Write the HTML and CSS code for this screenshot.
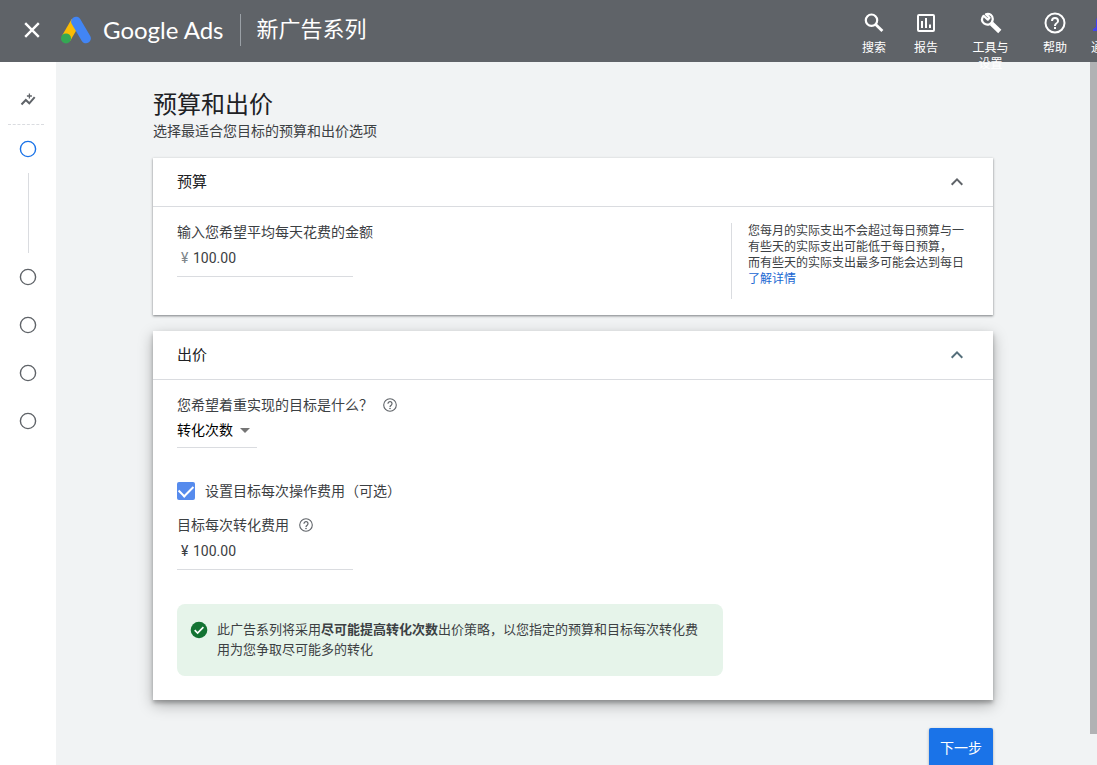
FILE: index.html
```html
<!DOCTYPE html>
<html lang="zh-CN">
<head>
<meta charset="utf-8">
<meta name="viewport" content="width=device-width, initial-scale=1">
<title>新广告系列 - Google Ads</title>
<link rel="stylesheet" href="styles.css">
</head>
<body>
<header class="topbar">
  <button class="close" type="button" aria-label="关闭">
    <svg width="24" height="24" viewBox="0 0 24 24"><path d="M5.2 5.2l13.6 13.6M18.8 5.2L5.2 18.8" stroke="currentColor" stroke-width="2.4" fill="none"/></svg>
  </button>
  <a class="brand" href="#">
    <svg width="30" height="28" viewBox="0 0 30 28" aria-hidden="true">
      <path d="M14.8 5.5L5 22.500" stroke="#fbbc04" stroke-width="9.600" fill="none"/>
      <path d="M15 5.600L25 22.400" stroke="#4285f4" stroke-width="9.800" stroke-linecap="round" fill="none"/>
      <circle cx="5" cy="22.400" r="5" fill="#34a853"/>
    </svg>
    <span class="brand-name">Google Ads</span>
  </a>
  <span class="page-name">新广告系列</span>
  <nav class="tools" aria-label="工具">
    <button class="tool" type="button">
      <svg width="24" height="24" viewBox="0 0 24 24"><circle cx="9.500" cy="9.200" r="5.700" stroke="currentColor" stroke-width="2.200" fill="none"/><path d="M13.700 13.400l6.700 6.700" stroke="currentColor" stroke-width="2.800" fill="none"/></svg>
      <span class="tool-label">搜索</span>
    </button>
    <button class="tool" type="button">
      <svg width="24" height="24" viewBox="0 0 24 24"><rect x="4" y="4" width="16" height="16" rx="1" stroke="currentColor" stroke-width="2" fill="none"/><path d="M8 10v7M12 7v10M16 13.500V17" stroke="currentColor" stroke-width="2" fill="none"/></svg>
      <span class="tool-label">报告</span>
    </button>
    <button class="tool tool-wide" type="button">
      <svg width="24" height="24" viewBox="0 0 24 24"><path d="M12.500 12.500l8.300 8" stroke="currentColor" stroke-width="4.600" fill="none"/><path d="M4.600 4.800L8.800 8.700 10.500 6.800 6.900 3.200C10.500 1.900 14.200 4.600 13.700 8.700c-.5 4.300-5.200 6.300-8.700 3.700C2.700 10.500 2.300 7.600 4.600 4.800z" stroke="currentColor" stroke-width="2.200" stroke-linejoin="round" fill="none"/></svg>
      <span class="tool-label">工具与设置</span>
    </button>
    <button class="tool" type="button">
      <svg width="24" height="24" viewBox="0 0 24 24"><circle cx="12" cy="12" r="9.500" stroke="currentColor" stroke-width="2" fill="none"/><path fill="currentColor" d="M11 16h2v2h-2zM12 6a4 4 0 0 0-4 4h2a2 2 0 1 1 4 0c0 2-3 1.800-3 5h2c0-2.200 3-2.500 3-5a4 4 0 0 0-4-4z"/></svg>
      <span class="tool-label">帮助</span>
    </button>
    <button class="tool tool-last" type="button">
      <svg class="bell" width="24" height="24" viewBox="0 0 24 24"><path fill="currentColor" d="M12 22a2 2 0 0 0 2-2h-4a2 2 0 0 0 2 2zM19 16v-6c0-3.100-1.900-5.600-5-6.300V3a2 2 0 0 0-4 0v.7C6.900 4.400 5 6.900 5 10v6l-3 2v2h20v-2z"/></svg>
      <span class="tool-label">通知</span>
    </button>
  </nav>
</header>

<div class="shell">
  <aside class="rail">
    <div class="rail-top">
      <svg width="24" height="24" viewBox="0 0 24 24"><path d="M5.500 16.500l4.300-4.500 3.500 3.300 5.400-6.100" stroke="#5f6368" stroke-width="2" fill="none"/><path d="M13.400 5.500v5M10.900 8h5" stroke="#5f6368" stroke-width="1.300" fill="none"/></svg>
    </div>
    <nav class="steps" aria-label="步骤">
      <button class="step step-current" type="button" aria-label="第 1 步"><svg width="18" height="18" viewBox="0 0 18 18"><circle cx="9" cy="9" r="7.600" stroke="currentColor" stroke-width="1.400" fill="none"/></svg></button>
      <span class="track"></span>
      <button class="step" type="button" aria-label="第 2 步"><svg width="18" height="18" viewBox="0 0 18 18"><circle cx="9" cy="9" r="7.600" stroke="currentColor" stroke-width="1.400" fill="none"/></svg></button>
      <button class="step" type="button" aria-label="第 3 步"><svg width="18" height="18" viewBox="0 0 18 18"><circle cx="9" cy="9" r="7.600" stroke="currentColor" stroke-width="1.400" fill="none"/></svg></button>
      <button class="step" type="button" aria-label="第 4 步"><svg width="18" height="18" viewBox="0 0 18 18"><circle cx="9" cy="9" r="7.600" stroke="currentColor" stroke-width="1.400" fill="none"/></svg></button>
      <button class="step" type="button" aria-label="第 5 步"><svg width="18" height="18" viewBox="0 0 18 18"><circle cx="9" cy="9" r="7.600" stroke="currentColor" stroke-width="1.400" fill="none"/></svg></button>
    </nav>
  </aside>

  <main class="content">
    <form class="column">
      <h1 class="title">预算和出价</h1>
      <p class="subtitle">选择最适合您目标的预算和出价选项</p>

      <section class="card">
        <button class="card-head" type="button" aria-expanded="true">
          <span>预算</span>
          <svg width="24" height="24" viewBox="0 0 24 24"><path d="M6.700 14.700L12 9.400l5.300 5.300" stroke="#5f6368" stroke-width="2" fill="none"/></svg>
        </button>
        <div class="card-body budget">
          <div>
            <label class="label" for="budget">输入您希望平均每天花费的金额</label>
            <div class="money"><span class="currency muted">¥</span><input id="budget" type="text" value="100.00"></div>
          </div>
          <p class="note">您每月的实际支出不会超过每日预算与一<br>有些天的实际支出可能低于每日预算，<br>而有些天的实际支出最多可能会达到每日<br><a href="#">了解详情</a></p>
        </div>
      </section>

      <section class="card card-active">
        <button class="card-head" type="button" aria-expanded="true">
          <span>出价</span>
          <svg width="24" height="24" viewBox="0 0 24 24"><path d="M6.700 14.700L12 9.400l5.300 5.300" stroke="#546e7a" stroke-width="2" fill="none"/></svg>
        </button>
        <div class="card-body">
          <div class="label-row">
            <label class="label" for="goal">您希望着重实现的目标是什么？</label>
            <svg width="14" height="14" viewBox="0 0 14 14"><circle cx="7" cy="7" r="6.300" stroke="#5f6368" stroke-width="1.100" fill="none"/><path d="M5 5.700a2 2 0 1 1 3.200 1.500C7.400 7.800 7 8.100 7 9" stroke="#5f6368" stroke-width="1.200" fill="none"/><circle cx="7" cy="10.500" r=".8" fill="#5f6368"/></svg>
          </div>
          <div class="picker">
            <select id="goal"><option>转化次数</option></select>
          </div>
          <label class="check-row"><input class="check" type="checkbox" checked><span>设置目标每次操作费用（可选）</span></label>
          <div class="label-row">
            <label class="label" for="cpa">目标每次转化费用</label>
            <svg width="14" height="14" viewBox="0 0 14 14"><circle cx="7" cy="7" r="6.300" stroke="#5f6368" stroke-width="1.100" fill="none"/><path d="M5 5.700a2 2 0 1 1 3.200 1.500C7.400 7.800 7 8.100 7 9" stroke="#5f6368" stroke-width="1.200" fill="none"/><circle cx="7" cy="10.500" r=".8" fill="#5f6368"/></svg>
          </div>
          <div class="money"><span class="currency">¥</span><input id="cpa" type="text" value="100.00"></div>
          <div class="notice">
            <svg width="20" height="20" viewBox="0 0 20 20"><circle cx="10" cy="10" r="8.300" fill="#137333"/><path d="M5.700 10.200l2.900 2.900 5.800-5.900" stroke="#fff" stroke-width="1.700" fill="none"/></svg>
            <p>此广告系列将采用<strong>尽可能提高转化次数</strong>出价策略，以您指定的预算和目标每次转化费用为您争取尽可能多的转化</p>
          </div>
        </div>
      </section>

      <button class="next" type="button">下一步</button>
    </form>
  </main>
  <div class="scrollbar"></div>
</div>
</body>
</html>
```
FILE: styles.css
```css
* {
  box-sizing: border-box;
}

body {
  display: flex;
  flex-direction: column;
  height: 100vh;
  margin: 0;
  overflow: hidden;
  background: #f1f3f4;
  color: #3c4043;
  font: 14px/20px Roboto, "Noto Sans CJK SC", sans-serif;
}

button,
input,
select {
  margin: 0;
  padding: 0;
  border: 0;
  background: none;
  color: inherit;
  font: inherit;
}

svg {
  display: block;
  flex: none;
}

h1,
p {
  margin: 0;
}

a {
  color: #1967d2;
  text-decoration: none;
}

.topbar {
  position: relative;
  z-index: 1;
  display: flex;
  flex: none;
  align-items: flex-start;
  height: 62px;
  padding-left: 20px;
  background: #5f6368;
  color: #fff;
}

.close {
  margin-top: 18px;
}

.brand {
  display: flex;
  align-items: center;
  gap: 12px;
  height: 32px;
  margin: 14px 0 0 17px;
  padding-right: 16px;
  border-right: 1px solid #9aa0a6;
  color: #fff;
}

.brand-name {
  font: 24px/32px Lato, sans-serif;
}

.page-name {
  margin: 14px 0 0 16px;
  font-size: 22px;
  line-height: 32px;
}

.tools {
  display: flex;
  flex: none;
  align-items: flex-start;
  margin: 11px -28px 0 auto;
}

.tool {
  display: flex;
  flex-direction: column;
  align-items: center;
  gap: 5px;
  width: 52px;
  font-size: 12px;
  line-height: 16px;
}

.tool-wide {
  width: 77px;
}

.tool-wide .tool-label {
  width: 36px;
}

.tool-last {
  width: 44px;
}

.bell {
  color: #4343f0;
}

.shell {
  display: flex;
  flex: 1;
  min-height: 0;
}

.rail {
  flex: none;
  width: 56px;
  background: #fff;
}

.rail-top {
  display: flex;
  justify-content: center;
  margin: 0 12px 0 8px;
  padding: 26px 0 12px 4px;
  border-bottom: 1px dashed #dadce0;
}

.steps {
  display: flex;
  flex-direction: column;
  align-items: center;
}

.step {
  display: grid;
  place-items: center;
  width: 48px;
  height: 48px;
  color: #5f6368;
}

.step-current {
  color: #1a73e8;
}

.track {
  width: 1px;
  height: 80px;
  background: #dadce0;
}

.content {
  flex: 1;
  min-width: 0;
  padding: 27px 24px 0;
}

.column {
  display: flex;
  flex-direction: column;
  max-width: 840px;
  margin: 0 auto;
}

.title {
  color: #202124;
  font-size: 24px;
  font-weight: 400;
  line-height: 32px;
}

.subtitle {
  margin-bottom: 17px;
}

.card {
  margin-bottom: 16px;
  background: #fff;
  box-shadow: 0 1px 2px rgba(60, 64, 67, 0.5), 0 1px 3px rgba(60, 64, 67, 0.2);
}

.card-active {
  margin-bottom: 28px;
  box-shadow: 0 3px 4px rgba(0, 0, 0, 0.26), 0 5px 14px rgba(0, 0, 0, 0.28);
}

.card-head {
  display: flex;
  align-items: center;
  justify-content: space-between;
  width: 100%;
  height: 49px;
  padding: 0 24px;
  border-bottom: 1px solid #dadce0;
  color: #202124;
  font-size: 15px;
}

.card-body {
  padding: 15px 24px 24px;
}

.budget {
  display: flex;
  justify-content: space-between;
  gap: 24px;
  padding-bottom: 16px;
}

.label-row {
  display: flex;
  align-items: center;
  gap: 10px;
}

.money {
  display: flex;
  align-items: flex-start;
  width: 176px;
  height: 35px;
  padding-left: 4px;
  border-bottom: 1px solid #dadce0;
}

.currency {
  width: 12px;
  line-height: 32px;
}

.muted {
  color: #80868b;
}

.money input {
  flex: 1;
  min-width: 0;
  height: 32px;
}

.note {
  width: 238px;
  min-height: 76px;
  margin-top: 1px;
  padding-left: 16px;
  border-left: 1px solid #dadce0;
  font-size: 12px;
  line-height: 16px;
}

.picker {
  position: relative;
  width: 80px;
  height: 33px;
  margin-bottom: 31px;
  border-bottom: 1px solid #dadce0;
}

.picker select {
  width: 100%;
  height: 30px;
  appearance: none;
  color: #000;
}

.picker::after {
  position: absolute;
  top: 13px;
  right: 7px;
  border: 5px solid transparent;
  border-top-color: #757575;
  border-bottom: 0;
  content: "";
  pointer-events: none;
}

.check-row {
  display: flex;
  align-items: center;
  gap: 10px;
  height: 24px;
  margin-bottom: 12px;
}

.check {
  display: grid;
  place-items: center;
  flex: none;
  width: 18px;
  height: 18px;
  appearance: none;
  border-radius: 2px;
  background: #568bed;
}

.check:checked::before {
  width: 12px;
  height: 7px;
  border: solid #fff;
  border-width: 0 0 2px 2px;
  content: "";
  transform: translateY(-2px) rotate(-45deg);
}

.notice {
  display: flex;
  gap: 8px;
  width: 546px;
  max-width: 100%;
  min-height: 72px;
  margin-top: 34px;
  padding: 16px 16px 16px 12px;
  border-radius: 8px;
  background: #e6f4ea;
  font-size: 13px;
}

.next {
  align-self: flex-end;
  width: 64px;
  height: 40px;
  border-radius: 2px;
  background: #1a73e8;
  box-shadow: 0 1px 3px rgba(0, 0, 0, 0.3);
  color: #fff;
}

.scrollbar {
  flex: none;
  width: 7px;
  height: calc(100% - 31px);
  background: #b1b2b4;
}
```
